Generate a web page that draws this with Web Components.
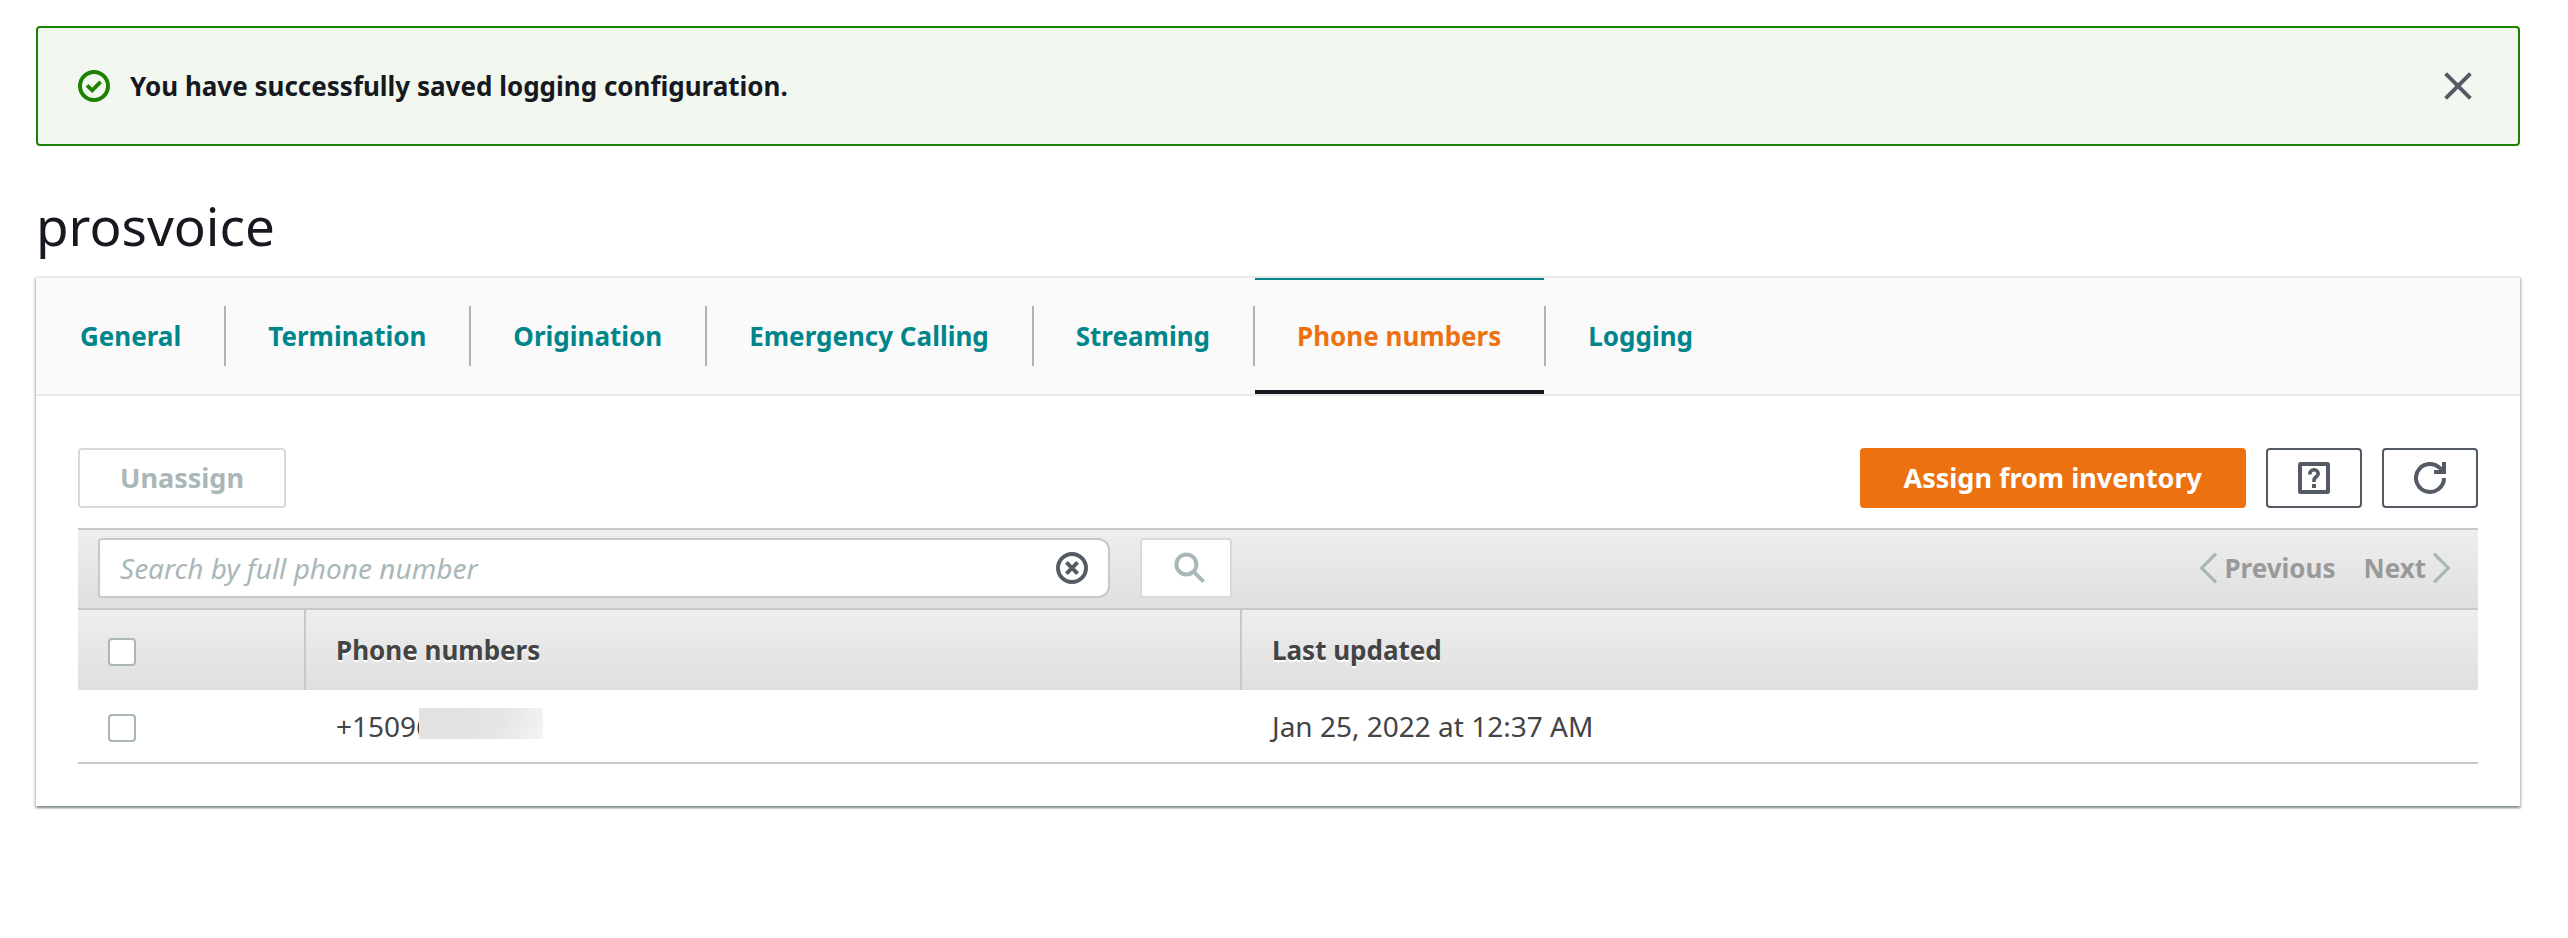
<!DOCTYPE html>
<html lang="en">
<head>
<meta charset="utf-8">
<title>prosvoice</title>
<style>
  body {
    margin: 0;
    padding: 26px 48px 48px 36px;
    background: #fff;
    color: #16191f;
    font: 400 28px/44px "Noto Sans", "Open Sans", sans-serif;
  }
  h1 { margin: 40px 0 0; font-size: 53px; line-height: 80px; font-weight: 400; padding-bottom: 10px; }
</style>
</head>
<body>
<alert-banner>You have successfully saved logging configuration.</alert-banner>
<main>
  <h1>prosvoice</h1>
  <tab-panel>
    <tab-link slot="tabs">General</tab-link>
    <tab-link slot="tabs">Termination</tab-link>
    <tab-link slot="tabs">Origination</tab-link>
    <tab-link slot="tabs">Emergency Calling</tab-link>
    <tab-link slot="tabs">Streaming</tab-link>
    <tab-link slot="tabs" active>Phone numbers</tab-link>
    <tab-link slot="tabs">Logging</tab-link>
    <action-bar>
      <ui-button disabled>Unassign</ui-button>
      <ui-button slot="end" variant="primary">Assign from inventory</ui-button>
      <ui-button slot="end" variant="icon" label="Help"><ui-icon name="help"></ui-icon></ui-button>
      <ui-button slot="end" variant="icon" label="Refresh"><ui-icon name="refresh"></ui-icon></ui-button>
    </action-bar>
    <search-toolbar></search-toolbar>
    <number-table></number-table>
  </tab-panel>
</main>

<script>
const define = (name, html, setup) => {
  const template = document.createElement('template');
  template.innerHTML = html;
  customElements.define(name, class extends HTMLElement {
    connectedCallback() {
      if (this.shadowRoot) return;
      this.attachShadow({ mode: 'open' }).append(template.content.cloneNode(true));
      if (setup) setup(this, this.shadowRoot);
    }
  });
};

const icons = {
  success: '<circle cx="8" cy="8" r="7"/><path d="M4.5 7.7 7.1 10.2 11.3 5.9" stroke-width="1.9"/>',
  close: '<path d="M1.8 1.8 14.2 14.2M14.2 1.8 1.8 14.2"/>',
  help: '<rect x="1" y="1" width="14" height="14" rx=".4"/><path d="M5.9 6.2v-.3a2.1 2 0 0 1 4.2 0c0 1.4-2.1 1.6-2.1 3.2v.9" stroke-width="1.8"/><path d="M8 11v2"/>',
  refresh: '<path d="M15 8A7 7 0 1 1 12.6 2.7L14.6 4.6"/><path d="M15 0V5H10"/>',
  clear: '<circle cx="8" cy="8" r="7"/><path d="M5.2 5.2 10.8 10.8M10.8 5.2 5.2 10.8"/>',
  search: '<circle cx="6.2" cy="6.2" r="5"/><path d="M9.8 9.8 14.8 14.8"/>',
  previous: '<path d="M12 .8 4.8 8 12 15.2" stroke-width="1.6"/>',
  next: '<path d="M4 .8 11.2 8 4 15.2" stroke-width="1.6"/>'
};

define('ui-icon', `<style>
  :host { display: block; width: 32px; height: 32px; }
  svg { display: block; width: 100%; height: 100%; fill: none; stroke: currentColor; stroke-width: 2; }
</style><svg viewBox="0 0 16 16" aria-hidden="true"></svg>`, (host, root) => {
  root.querySelector('svg').innerHTML = icons[host.getAttribute('name')] || '';
});

define('alert-banner', `<style>
  :host { display: flex; align-items: center; gap: 20px; box-sizing: border-box; min-height: 120px;
    padding: 0 44px 0 40px; border: 2px solid #1d8102; border-radius: 4px; background: #f2f8f0;
    font-size: 26px; font-weight: 700; }
  .status { color: #1d8102; }
  .text { flex: 1; }
  button { padding: 0; border: 0; background: none; color: #545b64; }
</style>
<ui-icon class="status" name="success"></ui-icon>
<div class="text" role="status"><slot></slot></div>
<button type="button" aria-label="Dismiss"><ui-icon name="close"></ui-icon></button>`);

define('tab-panel', `<style>
  :host { display: block; background: #fff;
    box-shadow: 0 2px 2px rgba(0,28,36,.3), 2px 2px 2px rgba(0,28,36,.15), -2px 2px 2px rgba(0,28,36,.15); }
  nav { display: flex; height: 116px; padding: 0 2px; border: solid #eaeaea; border-width: 2px 0; background: #fafafa; }
  .body { padding: 52px 42px 42px; }
</style>
<nav aria-label="Sections"><slot name="tabs"></slot></nav>
<div class="body"><slot></slot></div>`);

define('tab-link', `<style>
  :host { display: flex; align-items: center; }
  :host::after { content: ""; width: 2px; height: 60px; background: #aab7b8; }
  :host(:last-of-type)::after { display: none; }
  a { display: flex; align-items: center; box-sizing: border-box; height: 100%; padding: 2px 43px 0 42px;
    border: solid transparent; border-width: 2px 0 4px; color: #00858a; font-size: 26px; font-weight: 700; text-decoration: none; }
  :host([active]) a { color: #ec7211; border-top-color: #00858a; border-bottom-color: #16191f; }
</style><a href="#"><slot></slot></a>`, (host, root) => {
  if (host.hasAttribute('active')) root.querySelector('a').setAttribute('aria-current', 'page');
});

define('action-bar', `<style>
  :host { display: flex; justify-content: space-between; margin-bottom: 20px; }
  div { display: flex; gap: 20px; }
</style><div><slot></slot></div><div><slot name="end"></slot></div>`);

define('ui-button', `<style>
  :host { display: block; }
  button { display: flex; align-items: center; box-sizing: border-box; height: 60px; padding: 0 40px;
    border: 2px solid #545b64; border-radius: 4px; background: #fff; color: #545b64;
    font: inherit; font-size: 27px; font-weight: 700; line-height: 44px; white-space: nowrap; }
  button:disabled { border-color: #d5dbdb; color: #aab7b8; }
  :host([variant="primary"]) button { padding: 0 42px; border-color: #ec7211; background: #ec7211; color: #fff; }
  :host([variant="icon"]) button { padding: 0 30px; }
</style><button type="button"><slot></slot></button>`, (host, root) => {
  const button = root.querySelector('button');
  button.disabled = host.hasAttribute('disabled');
  if (host.hasAttribute('label')) button.setAttribute('aria-label', host.getAttribute('label'));
});

define('search-toolbar', `<style>
  :host { display: flex; align-items: flex-start; justify-content: space-between; gap: 30px; padding: 8px 20px 10px;
    border: solid #c8c8c8; border-width: 2px 0; background: linear-gradient(#eee, #dfdfdf); }
  form { display: flex; flex: 1; gap: 30px; }
  .field { display: flex; align-items: center; flex: 1; max-width: 1012px; box-sizing: border-box; height: 60px;
    padding: 0 20px; border: 2px solid #c8c8c8; border-radius: 4px 12px 12px 4px; background: #fff; }
  input { flex: 1; min-width: 0; padding: 0; border: 0; outline: 0; background: none; font: inherit; color: #444; }
  input::placeholder { color: #aab7b8; font-style: italic; opacity: 1; }
  button { padding: 0; border: 0; background: none; font: inherit; }
  .clear { color: #545b64; }
  .search { display: flex; align-items: center; box-sizing: border-box; width: 92px; height: 60px; padding: 0 24px 0 32px;
    border: 2px solid #d5dbdb; border-radius: 4px; background: #fff; color: #aab7b8; }
  .pager { display: flex; gap: 28px; }
  .pager button { display: flex; align-items: center; height: 60px; color: #999; font-size: 26px; font-weight: 700; }
  .pager ui-icon { color: #aab7b8; }
</style>
<form role="search">
  <div class="field">
    <input type="text" aria-label="Search by full phone number" placeholder="Search by full phone number">
    <button class="clear" type="button" aria-label="Clear"><ui-icon name="clear"></ui-icon></button>
  </div>
  <button class="search" type="button" aria-label="Search" disabled><ui-icon name="search"></ui-icon></button>
</form>
<div class="pager">
  <button type="button" disabled><ui-icon name="previous"></ui-icon>Previous</button>
  <button type="button" disabled>Next<ui-icon name="next"></ui-icon></button>
</div>`);

define('number-table', `<style>
  :host { display: block; }
  table { width: 100%; table-layout: fixed; border-collapse: separate; border-spacing: 0; color: #444; }
  .select { width: 228px; }
  .number { width: 39%; }
  tr > * { box-sizing: border-box; padding: 0 30px; text-align: left; vertical-align: middle; }
  thead tr { height: 80px; background: linear-gradient(#eee, #dfdfdf); }
  th { border-right: 2px solid #c8c8c8; font-size: 26px; font-weight: 700; text-shadow: 0 2px 0 #fff; }
  th:last-child { border-right: 0; }
  td { height: 74px; border-bottom: 2px solid #c8c8c8; }
  .check { padding-top: 4px; }
  input { display: block; appearance: none; box-sizing: border-box; width: 28px; height: 28px; margin: 0;
    border: 2px solid #aab7b8; border-radius: 4px; background: #fff; }
  .masked { display: flex; align-items: center; }
  .mask { width: 124px; height: 31px; margin: 0 0 6px -13px; background: linear-gradient(110deg, #e2e2e2 35%, #e6e6e6 65%, #f4f4f4); }
</style>
<table>
  <colgroup><col class="select"><col class="number"><col></colgroup>
  <thead><tr>
    <th class="check" scope="col"><input type="checkbox" aria-label="Select all phone numbers"></th>
    <th scope="col">Phone numbers</th>
    <th scope="col">Last updated</th>
  </tr></thead>
  <tbody><tr>
    <td class="check"><input type="checkbox" aria-label="Select phone number"></td>
    <td><div class="masked">+15096<span class="mask"></span></div></td>
    <td>Jan 25, 2022 at 12:37 AM</td>
  </tr></tbody>
</table>`);
</script>
</body>
</html>
